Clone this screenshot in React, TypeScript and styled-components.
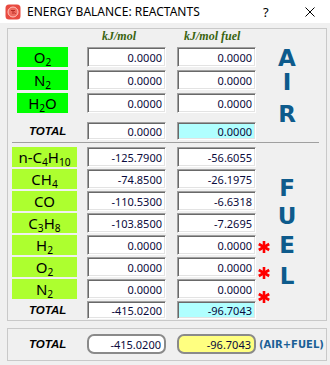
import * as React from 'react';
import styled, { createGlobalStyle } from 'styled-components';

const GlobalStyle = createGlobalStyle`
  html, body {
    margin: 0;
    padding: 0;
    background: #f0f0f0;
  }
  body {
    font-family: "Noto Sans", "Liberation Sans", sans-serif;
  }
`;

const Window = styled.div`
  width: 330px;
  height: 365px;
  background: #f0f0f0;
  display: flex;
  flex-direction: column;
  overflow: hidden;
`;

const TitleBar = styled.div`
  height: 23px;
  flex-shrink: 0;
  background: #ffffff;
  display: flex;
  align-items: center;
  padding: 0 15px 0 5px;
`;

const TitleText = styled.span`
  flex: 1;
  margin-left: 6px;
  font-size: 12px;
  color: #000;
  white-space: nowrap;
`;

const HelpButton = styled.span`
  width: 8px;
  font-size: 13px;
  color: #000;
`;

const CloseButton = styled.svg`
  margin-left: 34px;
  display: block;
`;

const Body = styled.div`
  padding: 5px 4px 0 7px;
`;

const GroupBox = styled.div<{ $mt?: number }>`
  width: 320px;
  box-sizing: border-box;
  border: 1px solid #c9c9c9;
  margin-top: ${p => p.$mt ?? 0}px;
  padding-bottom: 1px;
`;

const Section = styled.div<{ $mt?: number }>`
  display: flex;
  margin-top: ${p => p.$mt ?? 0}px;
`;

const Rows = styled.div<{ $gap: number }>`
  width: 262px;
  box-sizing: border-box;
  padding-left: 4px;
  display: flex;
  flex-direction: column;
  gap: ${p => p.$gap}px;
`;

const RowGroup = styled.div`
  display: flex;
  flex-direction: column;
  gap: 3px;
`;

const HeaderRow = styled.div`
  height: 18px;
  display: flex;
  padding-left: 75px;
  font-family: "Liberation Serif", serif;
  font-style: italic;
  font-weight: bold;
  font-size: 12px;
  line-height: 14px;
  color: #3a6410;
`;

const HeadCell = styled.div<{ $pad: number; $ml?: number }>`
  width: 79px;
  box-sizing: border-box;
  padding-left: ${p => p.$pad}px;
  margin-left: ${p => p.$ml ?? 0}px;
  white-space: nowrap;
`;

const Row = styled.div<{ $h?: number; $mt?: number }>`
  height: ${p => p.$h ?? 20}px;
  margin-top: ${p => p.$mt ?? 0}px;
  display: flex;
  align-items: center;
`;

const LabelCell = styled.div`
  width: 75px;
  height: 100%;
  display: flex;
  align-items: center;
`;

const Species = styled.div<{ $fuel?: boolean }>`
  width: ${p => (p.$fuel ? 65 : 51)}px;
  margin-left: ${p => (p.$fuel ? 0 : 5)}px;
  height: 20px;
  background: ${p => (p.$fuel ? '#adff2f' : '#00ff00')};
  font-size: 15px;
  line-height: 20px;
  text-align: center;
  color: #000;
  white-space: nowrap;
`;

const Sub = styled.span`
  font-size: 0.68em;
  vertical-align: -0.3em;
  line-height: 0;
`;

const TotalLabel = styled.div`
  padding-left: 17px;
  font-family: "Liberation Sans", sans-serif;
  font-style: italic;
  font-weight: 900;
  font-size: 11.5px;
  color: #000;
`;

const Field = styled.div<{ $bg?: string }>`
  width: 79px;
  height: 100%;
  box-sizing: border-box;
  border-top: 1px solid #a0a0a0;
  border-left: 1px solid #a0a0a0;
  border-bottom: 1px solid #ffffff;
  border-right: 1px solid #ffffff;
  box-shadow: inset 1px 1px 0 #696969, inset -1px -1px 0 #e3e3e3;
  background: ${p => p.$bg ?? '#ffffff'};
  padding-right: 3px;
  display: flex;
  align-items: center;
  justify-content: flex-end;
  font-size: 11px;
  color: #0a0a3c;
  & + & {
    margin-left: 11px;
  }
`;

const StarSlot = styled.div`
  width: 12px;
  margin-left: 2px;
  height: 100%;
  display: flex;
  align-items: center;
`;

const StarIcon = styled.svg<{ $dy: number }>`
  display: block;
  transform: translateY(${p => p.$dy}px);
`;

const Letters = styled.div<{ $top: number }>`
  width: 30px;
  margin-left: 2px;
  padding-top: ${p => p.$top}px;
  display: flex;
  flex-direction: column;
  align-items: center;
`;

const Letter = styled.div<{ $h: number }>`
  height: ${p => p.$h}px;
  line-height: 29px;
  font-family: "DejaVu Sans", sans-serif;
  font-weight: bold;
  font-size: 23px;
  color: #0e5b8c;
`;

const Separator = styled.div`
  height: 1px;
  margin: 2px 7px 0 4px;
  background: #a0a0a0;
`;

const SummaryRow = styled.div`
  height: 20px;
  padding: 5px 0 5px 4px;
  display: flex;
  align-items: center;
`;

const RoundField = styled.div<{ $bg: string }>`
  width: 79px;
  height: 20px;
  box-sizing: border-box;
  border: 2px solid #8a8a8a;
  border-radius: 7px;
  background: ${p => p.$bg};
  padding-right: 3px;
  display: flex;
  align-items: center;
  justify-content: flex-end;
  font-size: 11px;
  color: #0a0a3c;
  & + & {
    margin-left: 11px;
  }
`;

const AirFuel = styled.span`
  margin-left: 3px;
  font-family: "DejaVu Sans", sans-serif;
  font-weight: bold;
  font-size: 10px;
  color: #1b5f96;
  white-space: nowrap;
`;

const Star = ({ dy }: { dy: number }) => (
  <StarIcon $dy={dy} width="12" height="12" viewBox="0 0 12 12">
    <g stroke="#ff0000" strokeWidth="2.6" strokeLinecap="butt">
      <line x1="6" y1="0" x2="6" y2="12" />
      <line x1="0.8" y1="3" x2="11.2" y2="9" />
      <line x1="0.8" y1="9" x2="11.2" y2="3" />
    </g>
  </StarIcon>
);

const AppIcon = () => (
  <svg width="16" height="16" viewBox="0 0 16 16">
    <rect x="0.5" y="0.5" width="15" height="15" rx="3.5" fill="#e84a40" />
    <circle cx="8" cy="8" r="5" fill="#ef6a5e" stroke="#ffc4bc" strokeWidth="1" />
    <path d="M6 6.5h4M8 6.5v3.5M9.5 8.5l1 1.5" stroke="#b52a22" strokeWidth="1" fill="none" />
  </svg>
);

type Entry = { label: React.ReactNode; a: string; b: string; star?: number };

const air: Entry[] = [
  { label: <>O<Sub>2</Sub></>, a: '0.0000', b: '0.0000' },
  { label: <>N<Sub>2</Sub></>, a: '0.0000', b: '0.0000' },
  { label: <>H<Sub>2</Sub>O</>, a: '0.0000', b: '0.0000' },
];

const fuel: Entry[] = [
  { label: <>n-C<Sub>4</Sub>H<Sub>10</Sub></>, a: '-125.7900', b: '-56.6055' },
  { label: <>CH<Sub>4</Sub></>, a: '-74.8500', b: '-26.1975' },
  { label: <>CO</>, a: '-110.5300', b: '-6.6318' },
  { label: <>C<Sub>3</Sub>H<Sub>8</Sub></>, a: '-103.8500', b: '-7.2695' },
  { label: <>H<Sub>2</Sub></>, a: '0.0000', b: '0.0000', star: 2 },
  { label: <>O<Sub>2</Sub></>, a: '0.0000', b: '0.0000', star: 6 },
  { label: <>N<Sub>2</Sub></>, a: '0.0000', b: '0.0000', star: 8 },
];

const renderRow = (e: Entry, i: number, isFuel: boolean) => (
  <Row key={i}>
    <LabelCell>
      <Species $fuel={isFuel}>{e.label}</Species>
    </LabelCell>
    <Field>{e.a}</Field>
    <Field>{e.b}</Field>
    <StarSlot>{e.star !== undefined && <Star dy={e.star} />}</StarSlot>
  </Row>
);

export default function App() {
  return (
    <Window>
      <GlobalStyle />
      <TitleBar>
        <AppIcon />
        <TitleText>ENERGY BALANCE: REACTANTS</TitleText>
        <HelpButton>?</HelpButton>
        <CloseButton width="10" height="10" viewBox="0 0 10 10">
          <path d="M0.5 0.5L9.5 9.5M9.5 0.5L0.5 9.5" stroke="#000" strokeWidth="1" />
        </CloseButton>
      </TitleBar>
      <Body>
        <GroupBox>
          <Section>
            <Rows $gap={0}>
              <HeaderRow>
                <HeadCell $pad={15}>kJ/mol</HeadCell>
                <HeadCell $pad={7} $ml={11}>kJ/mol fuel</HeadCell>
              </HeaderRow>
              <RowGroup>{air.map((e, i) => renderRow(e, i, false))}</RowGroup>
              <Row $h={18} $mt={9}>
                <LabelCell>
                  <TotalLabel>TOTAL</TotalLabel>
                </LabelCell>
                <Field>0.0000</Field>
                <Field $bg="#b0ffff">0.0000</Field>
              </Row>
            </Rows>
            <Letters $top={15}>
              <Letter $h={24}>A</Letter>
              <Letter $h={32}>I</Letter>
              <Letter $h={29}>R</Letter>
            </Letters>
          </Section>
          <Separator />
          <Section $mt={4}>
            <Rows $gap={2}>
              {fuel.map((e, i) => renderRow(e, i, true))}
              <Row $h={18}>
                <LabelCell>
                  <TotalLabel>TOTAL</TotalLabel>
                </LabelCell>
                <Field>-415.0200</Field>
                <Field $bg="#b0ffff">-96.7043</Field>
              </Row>
            </Rows>
            <Letters $top={27}>
              <Letter $h={28}>F</Letter>
              <Letter $h={29}>U</Letter>
              <Letter $h={31}>E</Letter>
              <Letter $h={29}>L</Letter>
            </Letters>
          </Section>
        </GroupBox>
        <GroupBox $mt={7}>
          <SummaryRow>
            <LabelCell>
              <TotalLabel>TOTAL</TotalLabel>
            </LabelCell>
            <RoundField $bg="#ffffff">-415.0200</RoundField>
            <RoundField $bg="#ffff80">-96.7043</RoundField>
            <AirFuel>(AIR+FUEL)</AirFuel>
          </SummaryRow>
        </GroupBox>
      </Body>
    </Window>
  );
}
